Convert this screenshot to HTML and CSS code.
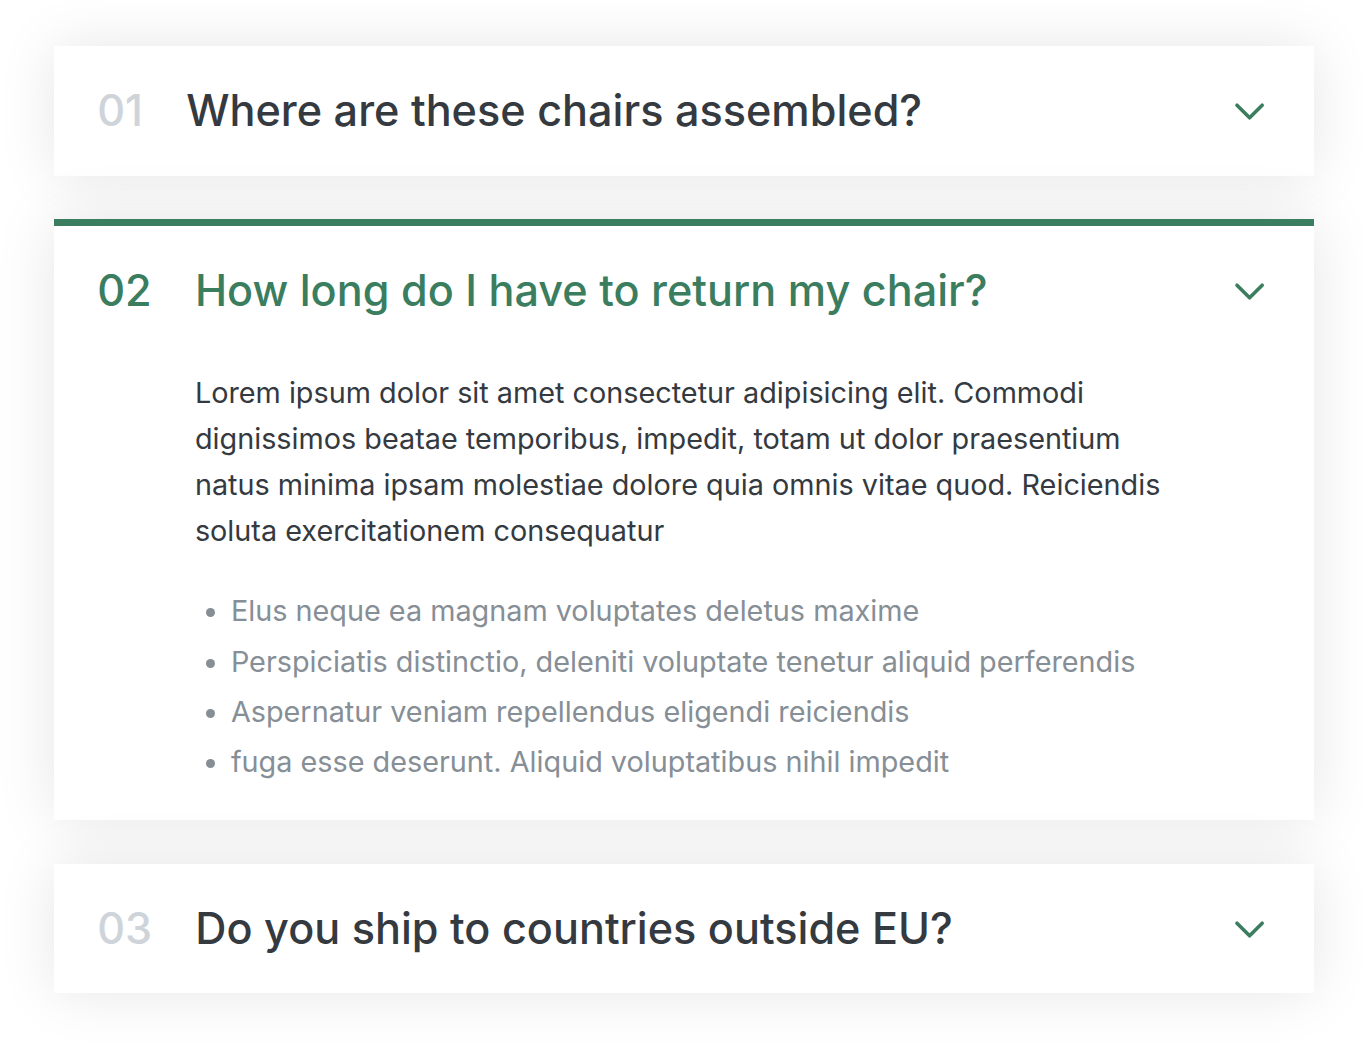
FILE: index.html
```html
<!DOCTYPE html>
<html lang="en">
<head>
<meta charset="UTF-8">
<title>Accordion</title>
<link rel="stylesheet" href="styles.css">
</head>
<body>
<div class="accordion">
  <div class="item">
    <p class="number">01</p>
    <p class="text">Where are these chairs assembled?</p>
    <svg class="icon" viewBox="0 0 24 24" fill="none" stroke="currentColor" stroke-width="2"><path stroke-linecap="round" stroke-linejoin="round" d="M19 9l-7 7-7-7"/></svg>
  </div>
  <div class="item open">
    <p class="number">02</p>
    <p class="text">How long do I have to return my chair?</p>
    <svg class="icon" viewBox="0 0 24 24" fill="none" stroke="currentColor" stroke-width="2"><path stroke-linecap="round" stroke-linejoin="round" d="M19 9l-7 7-7-7"/></svg>
    <div class="hidden-box">
      <p>Lorem ipsum dolor sit amet consectetur adipisicing elit. Commodi dignissimos beatae temporibus, impedit, totam ut dolor praesentium natus minima ipsam molestiae dolore quia omnis vitae quod. Reiciendis soluta exercitationem consequatur</p>
      <ul>
        <li>Elus neque ea magnam voluptates deletus maxime</li>
        <li>Perspiciatis distinctio, deleniti voluptate tenetur aliquid perferendis</li>
        <li>Aspernatur veniam repellendus eligendi reiciendis</li>
        <li>fuga esse deserunt. Aliquid voluptatibus nihil impedit</li>
      </ul>
    </div>
  </div>
  <div class="item">
    <p class="number">03</p>
    <p class="text">Do you ship to countries outside EU?</p>
    <svg class="icon" viewBox="0 0 24 24" fill="none" stroke="currentColor" stroke-width="2"><path stroke-linecap="round" stroke-linejoin="round" d="M19 9l-7 7-7-7"/></svg>
  </div>
</div>
</body>
</html>
```

FILE: styles.css
```css
* {
  margin: 0;
  padding: 0;
  box-sizing: border-box;
}

html,
body {
  min-height: 100%;
}

body {
  font-family: "Inter", "Noto Sans", sans-serif;
  color: #343a40;
  line-height: 1;
  background: #fff;
  padding: 46px 0 64px 54px;
}

.accordion {
  width: 1260px;
  display: flex;
  flex-direction: column;
  gap: 43.2px;
}

.item {
  background: #fff;
  box-shadow: 0 0 57.6px rgba(0, 0, 0, 0.1);
  padding: 43.2px;
  display: grid;
  grid-template-columns: auto 1fr auto;
  column-gap: 43.2px;
  row-gap: 57.6px;
  align-items: center;
}

.number,
.text {
  font-size: 43.2px;
  font-weight: 500;
}

.number {
  color: #ced4da;
}

.icon {
  width: 43.2px;
  height: 43.2px;
  color: #3a7d5f;
  display: block;
}

.hidden-box {
  grid-column: 2;
}

.hidden-box p {
  font-size: 28.8px;
  line-height: 1.6;
  margin-bottom: 43.2px;
}

.hidden-box ul {
  color: #868e96;
  font-size: 28.8px;
  margin-left: 36px;
  display: flex;
  flex-direction: column;
  gap: 21.6px;
}

.open {
  border-top: 7.2px solid #3a7d5f;
}

.open .number,
.open .text {
  color: #3a7d5f;
}
```
